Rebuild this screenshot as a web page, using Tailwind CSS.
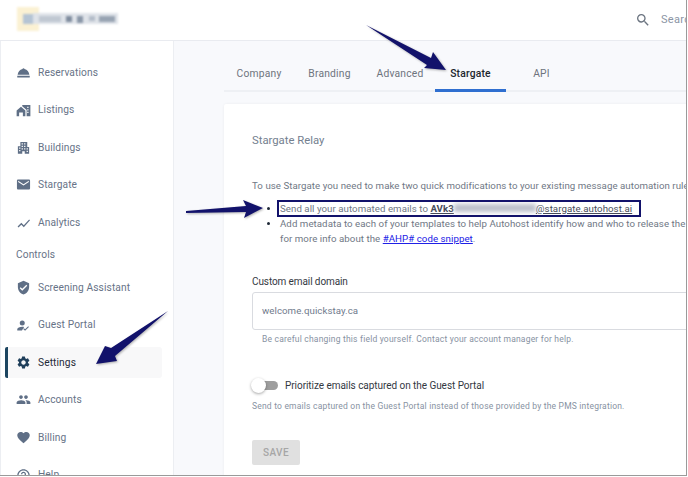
<!DOCTYPE html>
<html lang="en">
<head>
<meta charset="UTF-8">
<title>Autohost - Settings</title>
<script src="https://cdn.jsdelivr.net/npm/@tailwindcss/browser@4"></script>
</head>
<body class="bg-white">
<div class="relative w-[688px] h-[477px] overflow-hidden bg-white font-['Roboto',sans-serif]">
  <div class="relative w-[687px] h-[476px] overflow-hidden border-r border-b border-[#9a9a9a] flex flex-col">

    <!-- Header -->
    <header class="h-[41px] shrink-0 border-b border-[#e9ebf0] flex items-center pl-[17px] bg-white">
      <div class="relative w-[101px] h-[24px] -mt-[3px] blur-[1px]">
        <div class="absolute left-0 top-0 w-[22px] h-[24px] bg-[#fbf1d3]"></div>
        <div class="absolute left-[6px] top-[7px] w-[10px] h-[10px] bg-[#b5c4d4]"></div>
        <div class="absolute left-[16px] top-[6px] w-[85px] h-[11px] bg-[#dfe3e9]"></div>
        <div class="absolute left-[22px] top-[9px] w-[22px] h-[6px] bg-[#c0c8d2]"></div>
        <div class="absolute left-[49px] top-[9px] w-[6px] h-[6px] bg-[#7f8c9e]"></div>
        <div class="absolute left-[60px] top-[9px] w-[6px] h-[7px] bg-[#8a97a8]"></div>
        <div class="absolute left-[72px] top-[9px] w-[6px] h-[5px] bg-[#b4bdc9]"></div>
        <div class="absolute left-[82px] top-[9px] w-[16px] h-[6px] bg-[#98a4b3]"></div>
      </div>
      <div class="ml-auto flex items-center gap-[10px] w-[51px] shrink-0 overflow-hidden">
        <svg class="w-[16px] h-[16px] shrink-0 text-[#6b7480]" viewBox="0 0 24 24" fill="currentColor"><path d="M15.5 14h-.79l-.28-.27A6.47 6.47 0 0 0 16 9.5 6.5 6.5 0 1 0 9.5 16c1.61 0 3.09-.59 4.23-1.57l.27.28v.79l5 4.99L20.49 19l-4.99-5zm-6 0C7.01 14 5 11.99 5 9.5S7.01 5 9.5 5 14 7.01 14 9.5 11.99 14 9.5 14z"/></svg>
        <span class="text-[11px] tracking-[0.3px] text-[#8b95a5]">Search</span>
      </div>
    </header>

    <div class="flex flex-1 min-h-0">
      <!-- Sidebar -->
      <aside class="w-[174px] shrink-0 bg-white border-r border-l border-[#eceef2] pt-[13px] text-[10.2px] tracking-[0.1px] text-[#677387]">
        <div class="h-[37.4px] flex items-center pl-[15px] gap-[7px]">
          <svg class="w-[15px] h-[15px] shrink-0 text-[#5f6f86]" viewBox="0 0 24 24" fill="currentColor"><path d="M2 17h20v3H2zM12 5c-1 0-1.5.6-1.6 1.2C6 7 3.2 11 2.6 15.5h18.8C20.800 11 18 7 13.600 6.200 13.500 5.600 13 5 12 5z"/></svg>
          <span>Reservations</span>
        </div>
        <div class="h-[37.4px] flex items-center pl-[15px] gap-[7px]">
          <svg class="w-[15px] h-[15px] shrink-0 text-[#5f6f86]" viewBox="0 0 24 24" fill="currentColor"><path d="M1 21v-9l7-6 7 6v9h-4v-6H5v6zM10 3h13v18h-6V11l-7-6zM18 6v2h2V6zM18 10v2h2v-2zM18 14v2h2v-2z" fill-rule="evenodd"/></svg>
          <span>Listings</span>
        </div>
        <div class="h-[37.4px] flex items-center pl-[15px] gap-[7px]">
          <svg class="w-[15px] h-[15px] shrink-0 text-[#5f6f86]" viewBox="0 0 24 24" fill="currentColor"><path fill-rule="evenodd" d="M3 22V10h4V3h11v8h3v11h-7v-4h-4v4zM9 5v2h2V5zM13 5v2h2V5zM9 9v2h2V9zM13 9v2h2V9zM5 12v2h2v-2zM9 13v2h2v-2zM13 13v2h2v-2zM17 13v2h2v-2zM5 16v2h2v-2zM17 17v2h2v-2z"/></svg>
          <span>Buildings</span>
        </div>
        <div class="h-[37.4px] flex items-center pl-[15px] gap-[7px]">
          <svg class="w-[15px] h-[15px] shrink-0 text-[#5f6f86]" viewBox="0 0 24 24" fill="currentColor"><path d="M20.500 4h-17C2.400 4 1.500 4.900 1.500 6v12c0 1.100.9 2 2 2h17c1.100 0 2-.9 2-2V6c0-1.100-.9-2-2-2zm0 4-8.500 5.500L3.500 8V6l8.500 5.500L20.500 6z"/></svg>
          <span>Stargate</span>
        </div>
        <div class="h-[37.4px] flex items-center pl-[15px] gap-[7px]">
          <svg class="w-[15px] h-[15px] shrink-0 text-[#5f6f86]" viewBox="0 0 24 24" fill="currentColor"><path d="m2.500 18.500 6-6 4 4L21 7l1.400 1.400-9.900 11-4-4-4.500 4.500z"/></svg>
          <span>Analytics</span>
        </div>
        <div class="h-[28px] flex items-center pl-[15px]">Controls</div>
        <div class="h-[37.4px] flex items-center pl-[15px] gap-[7px]">
          <svg class="w-[15px] h-[15px] shrink-0 text-[#5f6f86]" viewBox="0 0 24 24" fill="currentColor"><path d="M12 1 3 5v6c0 5.550 3.840 10.740 9 12 5.160-1.260 9-6.450 9-12V5l-9-4zm-2 16-4-4 1.410-1.410L10 14.170l6.590-6.590L18 9l-8 8z"/></svg>
          <span>Screening Assistant</span>
        </div>
        <div class="h-[37.4px] flex items-center pl-[15px] gap-[7px]">
          <svg class="w-[15px] h-[15px] shrink-0 text-[#5f6f86]" viewBox="0 0 24 24" fill="currentColor"><path d="M10 12a4 4 0 1 0 0-8 4 4 0 0 0 0 8zM2 20v-2c0-2.600 4-4 8-4 1 0 2 .1 3 .3L9.500 20zM14.500 20.500l-3-3 1.200-1.200 1.800 1.800 5-5 1.200 1.200z"/></svg>
          <span>Guest Portal</span>
        </div>
        <div class="h-[31px] my-[3.200px] ml-[4px] mr-[11px] flex items-center pl-[8px] gap-[7px] bg-[#f8f8f9] rounded-l-[2px] rounded-r-[3px] border-l-[3px] border-[#1c4560] text-[#1f2937]">
          <svg class="w-[15px] h-[15px] shrink-0 text-[#1f3f5b]" viewBox="0 0 24 24" fill="currentColor"><path d="M19.140 12.940c.04-.3.06-.61.06-.94 0-.32-.02-.64-.07-.94l2.030-1.580a.49.49 0 0 0 .12-.61l-1.920-3.320a.488.488 0 0 0-.59-.22l-2.390.96c-.5-.38-1.030-.7-1.620-.94l-.36-2.540a.484.484 0 0 0-.48-.41h-3.840c-.24 0-.43.17-.47.41l-.36 2.540c-.59.24-1.130.57-1.620.94l-2.390-.96c-.22-.08-.47 0-.59.22L2.740 8.870c-.12.21-.08.47.12.61l2.030 1.580c-.05.3-.09.63-.09.94s.02.64.07.94l-2.030 1.580a.49.49 0 0 0-.12.61l1.920 3.320c.12.22.37.29.59.22l2.390-.96c.5.38 1.030.7 1.620.94l.36 2.540c.05.24.24.41.48.41h3.840c.24 0 .44-.17.47-.41l.36-2.540c.59-.24 1.130-.56 1.620-.94l2.390.96c.22.08.47 0 .59-.22l1.920-3.320c.12-.22.07-.47-.12-.61l-2.010-1.580zM12 15.600c-1.980 0-3.600-1.620-3.600-3.600s1.620-3.600 3.600-3.600 3.600 1.620 3.600 3.600-1.620 3.600-3.600 3.600z"/></svg>
          <span>Settings</span>
        </div>
        <div class="h-[37.4px] flex items-center pl-[15px] gap-[7px]">
          <svg class="w-[15px] h-[15px] shrink-0 text-[#5f6f86]" viewBox="0 0 24 24" fill="currentColor"><path d="M16 11c1.660 0 2.990-1.340 2.990-3S17.660 5 16 5s-3 1.340-3 3 1.340 3 3 3zm-8 0c1.660 0 2.990-1.340 2.990-3S9.660 5 8 5 5 6.340 5 8s1.340 3 3 3zm0 2c-2.330 0-7 1.170-7 3.500V19h14v-2.500C15 14.170 10.330 13 8 13zm8 0c-.29 0-.62.02-.97.05 1.160.84 1.970 1.970 1.970 3.450V19h6v-2.500c0-2.330-4.670-3.500-7-3.500z"/></svg>
          <span>Accounts</span>
        </div>
        <div class="h-[37.4px] flex items-center pl-[15px] gap-[7px] mt-[0.5px]">
          <svg class="w-[15px] h-[15px] shrink-0 text-[#5f6f86]" viewBox="0 0 24 24" fill="currentColor"><path d="m12 21.350-1.450-1.320C5.400 15.360 2 12.280 2 8.500 2 5.420 4.420 3 7.500 3c1.740 0 3.410.81 4.500 2.090C13.090 3.810 14.760 3 16.500 3 19.580 3 22 5.420 22 8.500c0 3.780-3.400 6.860-8.550 11.540L12 21.350z"/></svg>
          <span>Billing</span>
        </div>
        <div class="h-[37.4px] flex items-center pl-[15px] gap-[7px]">
          <svg class="w-[15px] h-[15px] shrink-0 text-[#5f6f86]" viewBox="0 0 24 24" fill="currentColor"><path d="M11 18h2v-2h-2v2zm1-16C6.480 2 2 6.480 2 12s4.480 10 10 10 10-4.480 10-10S17.520 2 12 2zm0 18c-4.410 0-8-3.590-8-8s3.590-8 8-8 8 3.590 8 8-3.590 8-8 8zm0-14c-2.210 0-4 1.790-4 4h2c0-1.100.9-2 2-2s2 .9 2 2c0 2-3 1.750-3 5h2c0-2.250 3-2.500 3-5 0-2.210-1.790-4-4-4z"/></svg>
          <span>Help</span>
        </div>
      </aside>

      <!-- Main -->
      <main class="flex-1 min-w-0 bg-[#f8f9fc] pl-[50px] overflow-hidden">
        <nav class="h-[51px] border-b-2 border-[#eef0f4] flex text-[10.3px] tracking-[0.2px] text-[#6e747d]">
          <div class="w-[70px] flex items-center justify-center pt-[17px]">Company</div>
          <div class="w-[71px] flex items-center justify-center pt-[17px]">Branding</div>
          <div class="w-[70px] flex items-center justify-center pt-[17px]">Advanced</div>
          <div class="w-[71px] flex items-center justify-center pt-[17px] -mb-[2px] border-b-[3px] border-[#2f6fd0] text-[#20252d] font-medium">Stargate</div>
          <div class="w-[71px] flex items-center justify-center pt-[17px]">API</div>
        </nav>

        <section class="mt-[12px] w-[600px] h-[400px] bg-white rounded-[2px] shadow-[0_0_3px_rgba(0,0,0,0.06)] pl-[28px] pt-[29px]">
          <h2 class="text-[11.3px] leading-[16px] text-[#74808f]">Stargate Relay</h2>

          <div class="mt-[29px] w-[560px] text-[9.7px] leading-[15px] tracking-[0.05px] text-[#6f7785]">
            <p class="whitespace-nowrap">To use Stargate you need to make two quick modifications to your existing message automation rules</p>
            <ul class="mt-[8px] list-disc pl-[28px] marker:text-[#1f2937]">
              <li class="whitespace-nowrap">Send all your automated emails to <u class="text-[#474c5a]"><b class="font-bold">AVk3</b><span class="inline-block w-[82px] h-[8px] bg-[#bcc0cb] blur-[2px]"></span>@stargate.autohost.ai</u></li>
              <li class="whitespace-nowrap">Add metadata to each of your templates to help Autohost identify how and who to release the</li>
              <li class="list-none whitespace-nowrap">for more info about the <a class="underline text-[#2020e6]" href="#">#AHP# code snippet</a>.</li>
            </ul>
          </div>

          <div class="mt-[29px] text-[10px] leading-[14px] tracking-[-0.1px] text-[#33383f]">Custom email domain</div>
          <div class="mt-[3px] h-[38px] w-[480px] border border-[#d9dbe0] rounded-[3px] flex items-center pl-[9px] text-[9.7px] tracking-[0.05px] text-[#6f7a8c]">welcome.quickstay.ca</div>
          <p class="mt-[2px] pl-[10px] text-[8.5px] leading-[14px] tracking-[0.2px] text-[#8792a2]">Be careful changing this field yourself. Contact your account manager for help.</p>

          <div class="mt-[31px] flex items-center h-[16px]">
            <span class="relative w-[26px] h-[9px] rounded-full bg-[#9e9e9e] shrink-0">
              <span class="absolute -left-[1px] -top-[3px] w-[15px] h-[15px] rounded-full bg-white shadow-[0_1px_3px_rgba(0,0,0,0.35)]"></span>
            </span>
            <span class="ml-[7px] text-[10px] tracking-[-0.05px] text-[#33383f]">Prioritize emails captured on the Guest Portal</span>
          </div>
          <p class="mt-[6px] text-[8.5px] leading-[14px] tracking-[0.2px] text-[#8792a2]">Send to emails captured on the Guest Portal instead of those provided by the PMS integration.</p>

          <div class="mt-[27px] w-[48px] h-[25px] rounded-[2px] bg-[#e0e0e0] flex items-center justify-center text-[10px] font-medium tracking-[0.4px] text-[#a6a6a6]">SAVE</div>
        </section>
      </main>
    </div>

    <!-- Highlight box around the email line -->
    <div class="absolute left-[277px] top-[200px] w-[364px] h-[17px] border-2 border-[#12126b]"></div>

    <!-- Annotation arrows -->
    <svg class="absolute left-0 top-0 w-[687px] h-[476px] pointer-events-none drop-shadow-[1px_1px_1px_rgba(0,0,0,0.3)]" viewBox="0 0 687 476" fill="#12126b">
      <path d="M366 25 L431 58 L433 52 L446 70 L424 68 L427 65 Z"/>
      <path d="M186 211 L246 206 L243 200 L263 208 L244 218 L246 212 L186 213 Z"/>
      <path d="M168 311 L111 348 L105 346 L96 364 L117 361 L115 356 Z"/>
    </svg>
  </div>
</div>
</body>
</html>
